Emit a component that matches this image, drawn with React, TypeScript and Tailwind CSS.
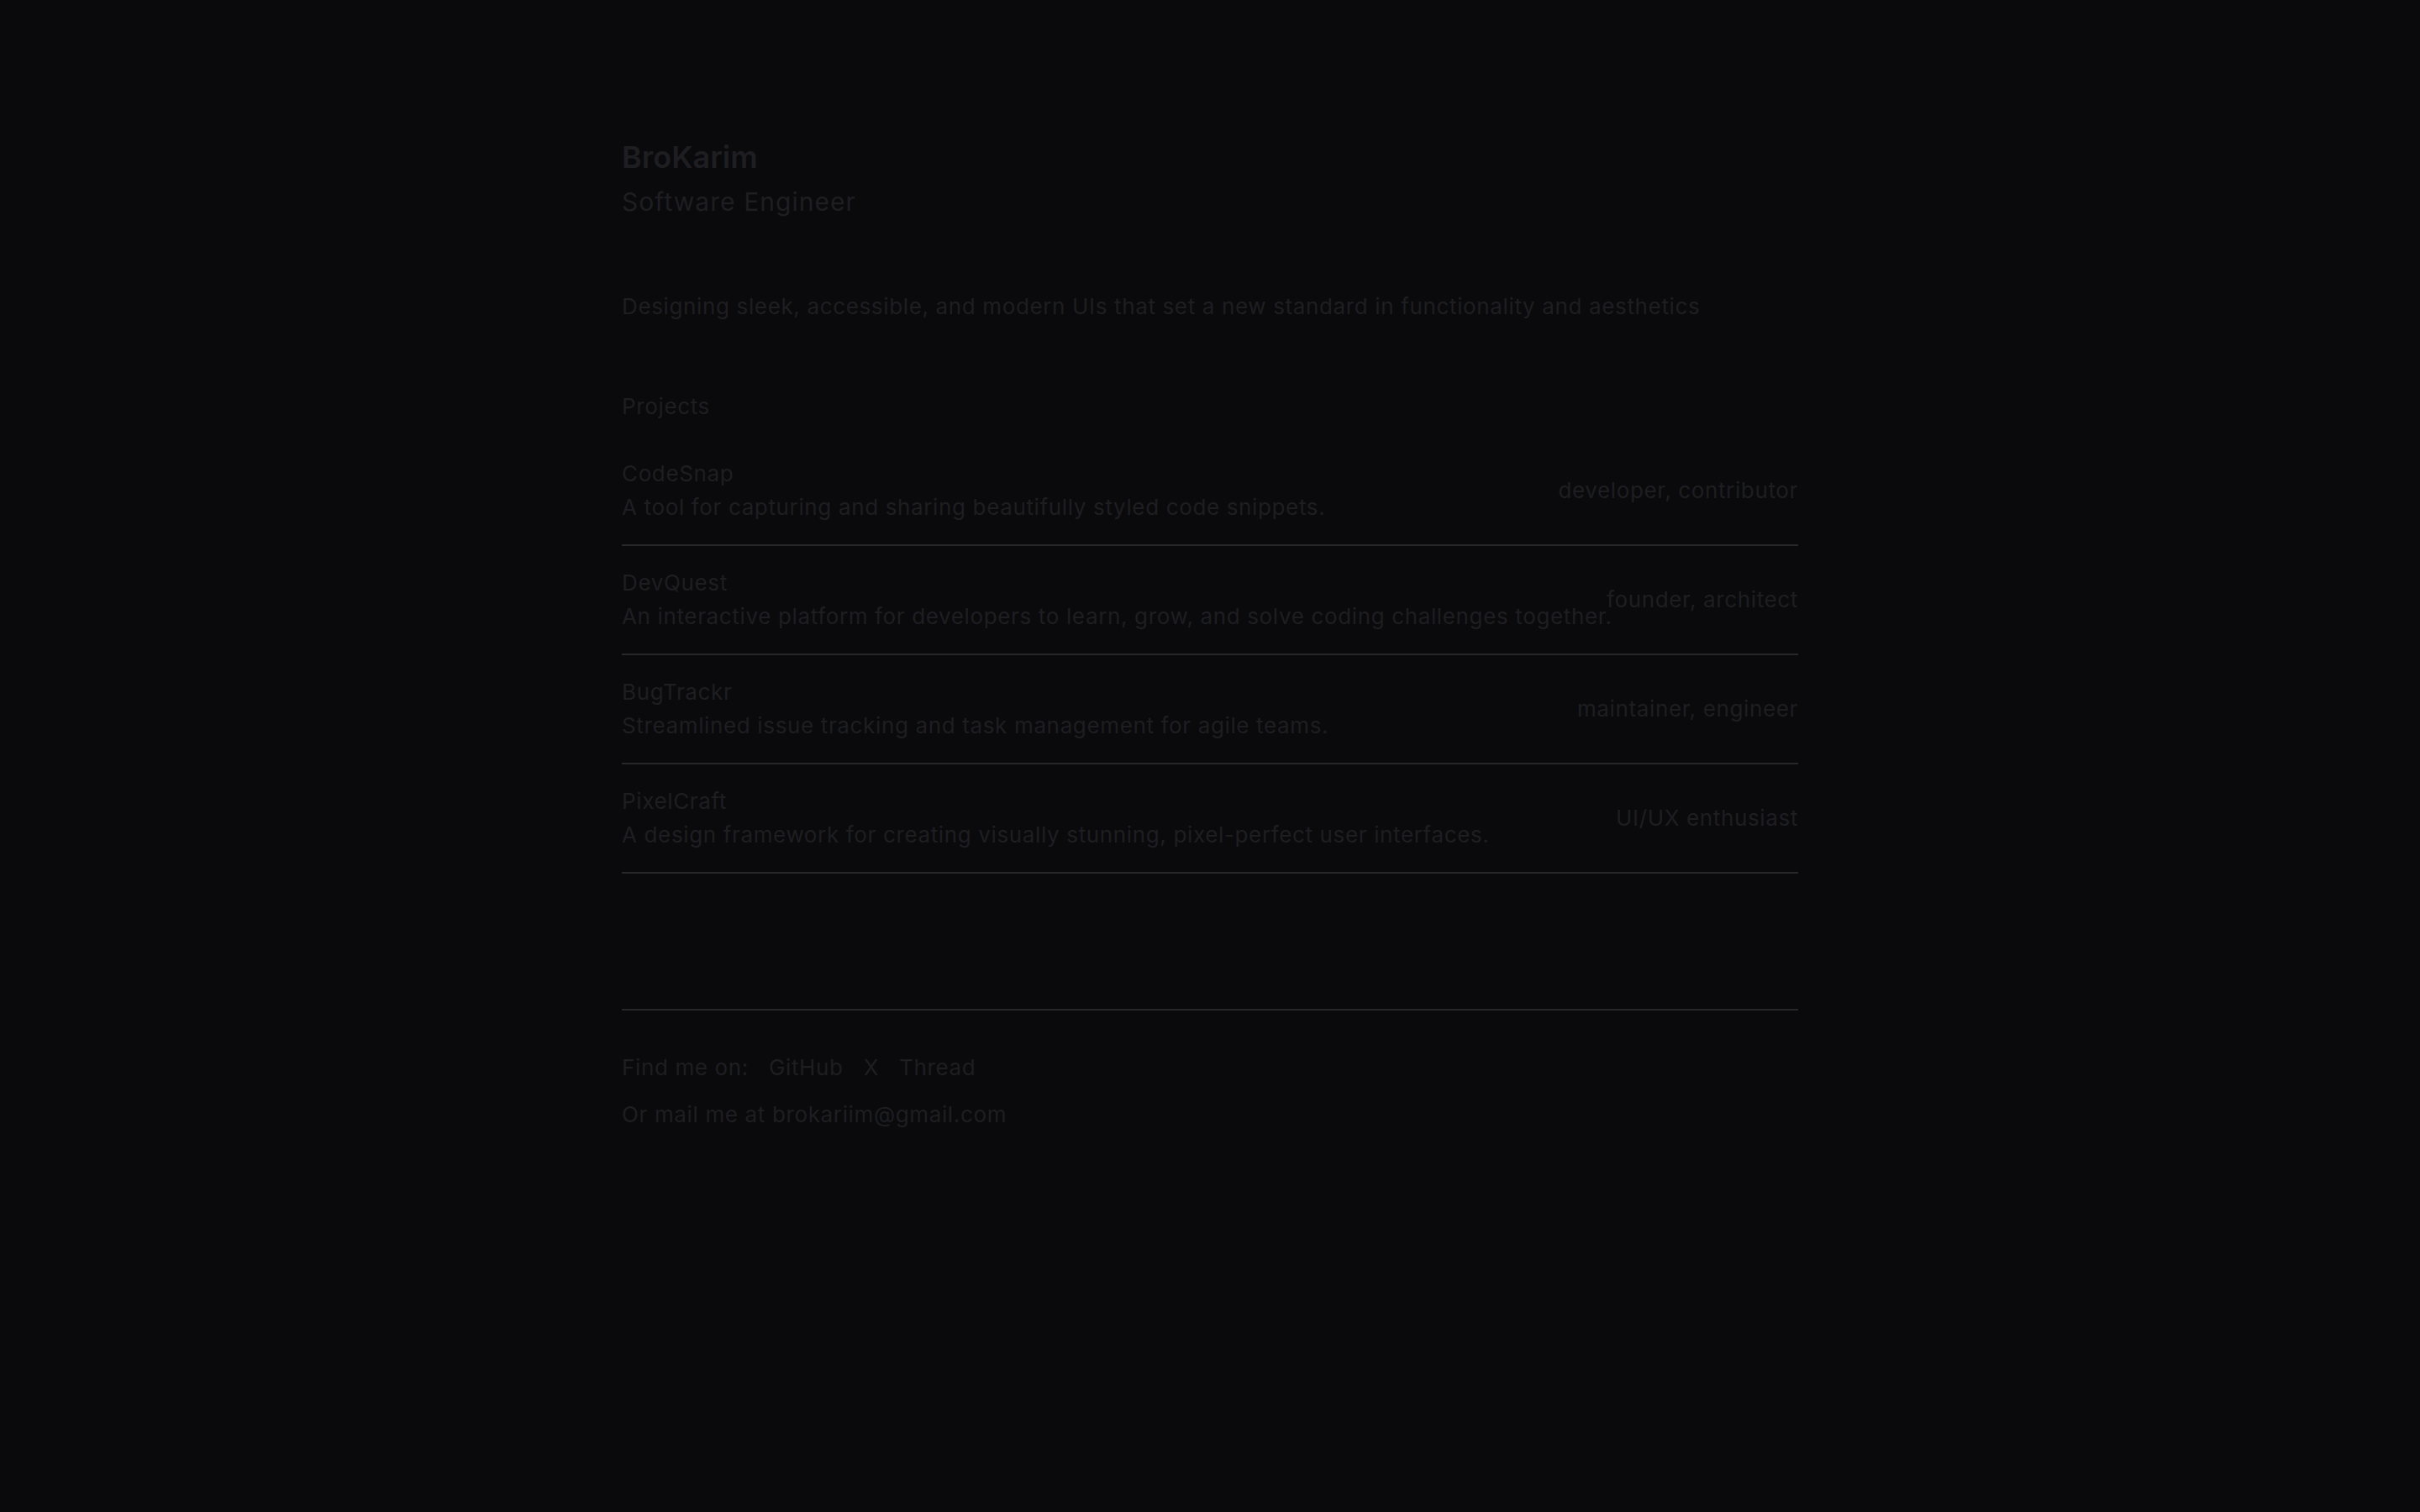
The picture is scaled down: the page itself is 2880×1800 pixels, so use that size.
import React from 'react';

const projects = [
  {
    name: 'CodeSnap',
    desc: 'A tool for capturing and sharing beautifully styled code snippets.',
    role: 'developer, contributor',
  },
  {
    name: 'DevQuest',
    desc: 'An interactive platform for developers to learn, grow, and solve coding challenges together.',
    role: 'founder, architect',
  },
  {
    name: 'BugTrackr',
    desc: 'Streamlined issue tracking and task management for agile teams.',
    role: 'maintainer, engineer',
  },
  {
    name: 'PixelCraft',
    desc: 'A design framework for creating visually stunning, pixel-perfect user interfaces.',
    role: 'UI/UX enthusiast',
  },
];

const App = () => {
  return (
    <main className="min-h-screen w-full bg-[#0a0a0c] text-[#1e1e22] font-['Inter','Noto_Sans',sans-serif]">
      <div className="mx-auto w-[1400px] pt-[165px] pb-40 tracking-[0.04em]">
        {/* Header */}
        <header>
          <h1 className="text-[36px] leading-[44px] font-semibold tracking-[0em]">BroKarim</h1>
          <p className="mt-[11px] text-[30px] leading-[40px] tracking-[0.035em]">Software Engineer</p>
        </header>

        <p className="mt-[85px] text-[26px] leading-[40px]">
          Designing sleek, accessible, and modern UIs that set a new standard in functionality and aesthetics
        </p>

        {/* Projects */}
        <section className="mt-[79px]">
          <h2 className="mb-4 text-[26px] leading-[40px]">Projects</h2>
          <ul>
            {projects.map((p) => (
              <li
                key={p.name}
                className="flex items-center justify-between border-b-2 border-[#27272a] py-6 text-[26px] leading-[40px]"
              >
                <div className="min-w-0 whitespace-nowrap">
                  <div>{p.name}</div>
                  <div>{p.desc}</div>
                </div>
                <div className="shrink-0 text-right whitespace-nowrap">{p.role}</div>
              </li>
            ))}
          </ul>
        </section>

        {/* Footer */}
        <footer className="mt-[161px] border-t-2 border-[#27272a] pt-12 text-[26px] leading-[40px]">
          <div className="flex gap-6">
            <span>Find me on:</span>
            <a href="#">GitHub</a>
            <a href="#">X</a>
            <a href="#">Thread</a>
          </div>
          <p className="mt-4">Or mail me at brokariim@gmail.com</p>
        </footer>
      </div>
    </main>
  );
};

export default App;
